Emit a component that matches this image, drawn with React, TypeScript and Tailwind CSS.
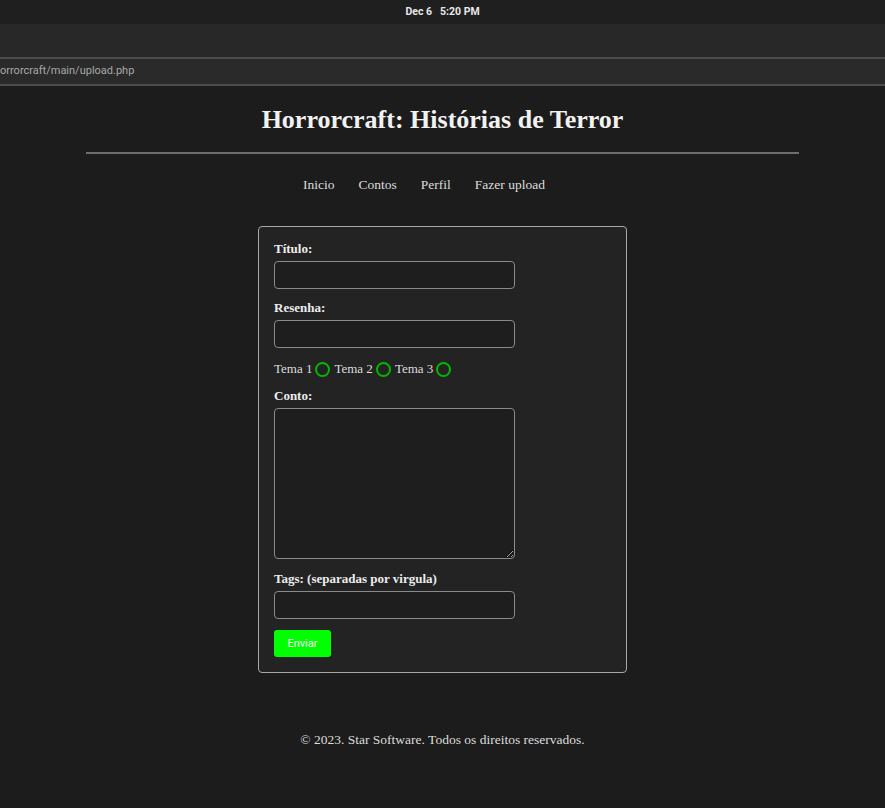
const serif = "font-['Liberation_Serif','DejaVu_Serif',serif]";
const field = "mt-[2px] block h-7 w-[241px] rounded-[4px] border border-[#8a8a8a] bg-[#1e1e1e] outline-none";

function Radio({ label }: { label: string }) {
  return (
    <label className="flex items-center gap-[3px]">
      <span>{label}</span>
      <span className="size-[15px] rounded-full border-2 border-[#00b800]" />
    </label>
  );
}

export default function App() {
  return (
    <div className="min-h-[808px] w-[885px] bg-[#1c1c1c] text-white">
      {/* system bar */}
      <div className="h-6 bg-[#1f1f1f] flex items-center justify-center text-[10.5px] font-bold text-[#e8e8e8] font-['Roboto',sans-serif] gap-2">
        <span>Dec 6</span>
        <span>5:20 PM</span>
      </div>
      {/* browser chrome */}
      <div className="h-[33px] bg-[#282828]" />
      <div className="h-[2px] bg-[#4c4c4c]" />
      <div className="h-[25px] bg-[#2a2a2a] flex items-center text-[11px] text-[#a8a8a8] font-['Roboto',sans-serif]">
        orrorcraft/main/upload.php
      </div>
      <div className="h-[2px] bg-[#4c4c4c]" />

      <div className={serif}>
        <header className="pt-[17px]">
          <h1 className="text-center text-[26px] font-bold leading-[34px] text-[#f2f2f2]">
            Horrorcraft: Histórias de Terror
          </h1>
          <div className="mx-[86px] mt-[15px] h-[2px] bg-[#6e6e6e]" />
          <nav className="mt-[21px] flex justify-center gap-6 pr-[37px] text-[13.5px] leading-5 text-[#dcdcdc]">
            <span>Inicio</span>
            <span>Contos</span>
            <span>Perfil</span>
            <span>Fazer upload</span>
          </nav>
        </header>

        <main className="mt-[31px] flex justify-center">
          <form className="w-[369px] rounded-[4px] border border-[#a8a8a8] bg-[#232323] px-[15px] pt-[12px] pb-[15px] text-[13px] leading-5">
            <div className="font-bold text-[#ededed]">Título:</div>
            <input type="text" className={field} />

            <div className="mt-[9px] font-bold text-[#ededed]">Resenha:</div>
            <input type="text" className={field} />

            <div className="mt-[11px] flex items-center gap-1 text-[#dcdcdc]">
              <Radio label="Tema 1" />
              <Radio label="Tema 2" />
              <Radio label="Tema 3" />
            </div>

            <div className="mt-[7px] font-bold text-[#ededed]">Conto:</div>
            <textarea className="mt-[2px] block h-[151px] w-[241px] rounded-[4px] border border-[#8a8a8a] bg-[#1e1e1e] outline-none" />

            <div className="mt-[10px] font-bold text-[#ededed]">Tags: (separadas por virgula)</div>
            <input type="text" className={field} />

            <button
              type="button"
              className="mt-[11px] block h-[27px] w-[57px] rounded-[3px] bg-[#00ff00] text-[11px] text-white font-['Roboto',sans-serif]"
            >
              Enviar
            </button>
          </form>
        </main>

        <footer className="mt-[57px] text-center text-[13.5px] leading-5 text-[#dcdcdc]">
          © 2023. Star Software. Todos os direitos reservados.
        </footer>
      </div>
    </div>
  );
}
